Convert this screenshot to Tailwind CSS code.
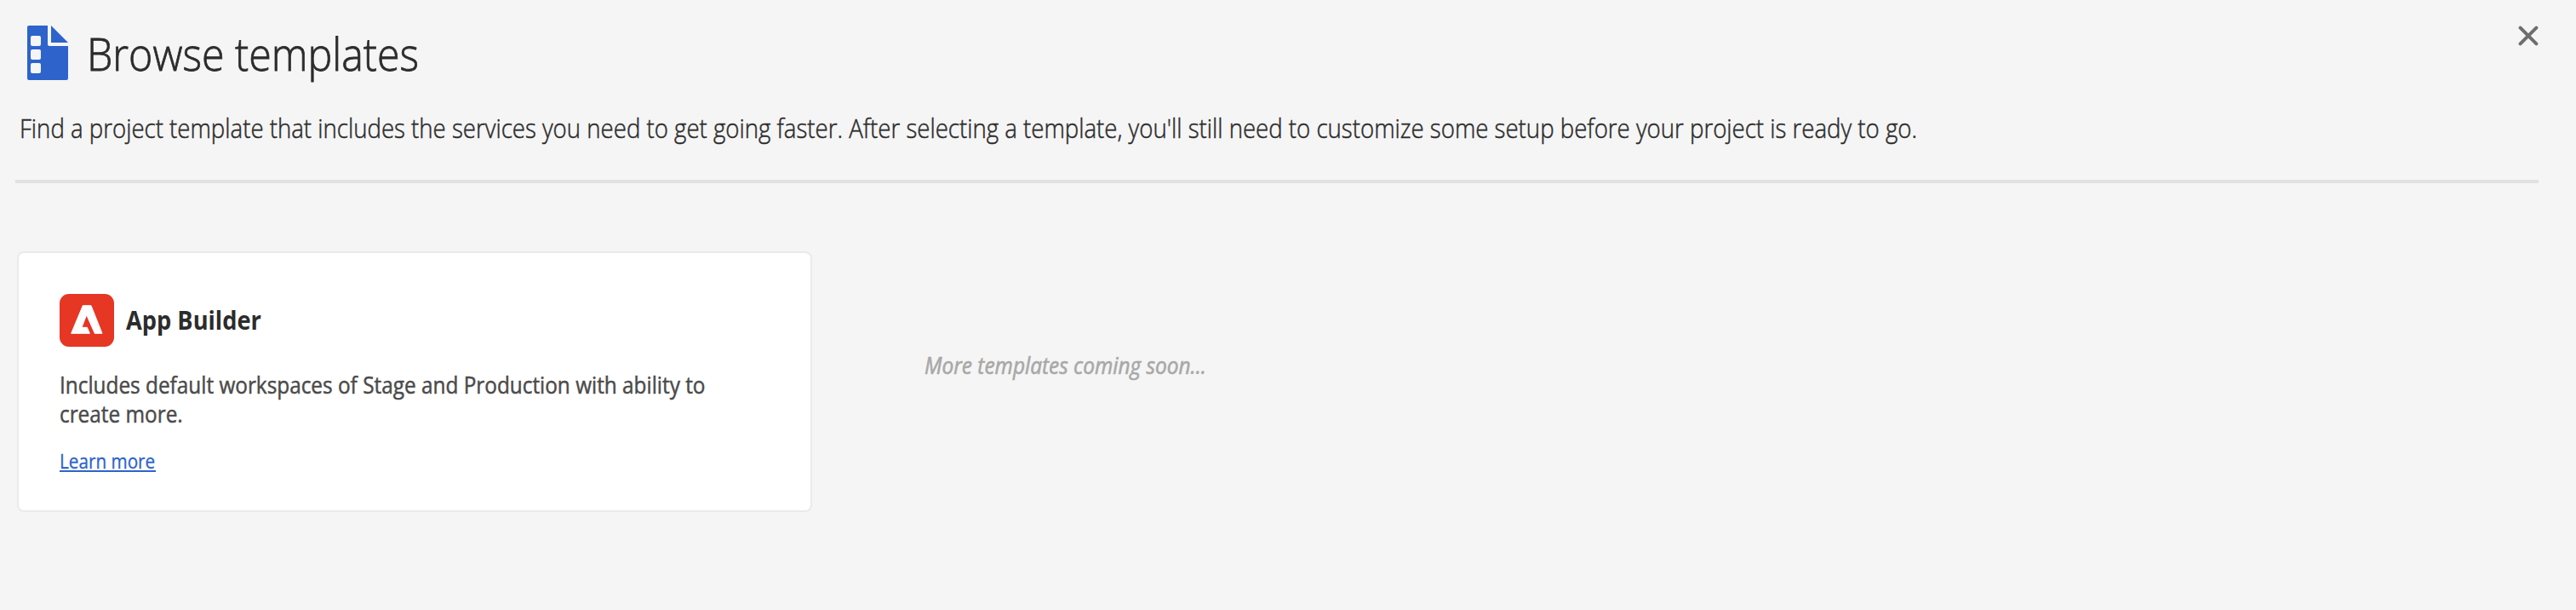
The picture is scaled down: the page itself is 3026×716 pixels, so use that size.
<!DOCTYPE html>
<html lang="en">
<head>
<meta charset="utf-8">
<title>Browse templates</title>
<script src="https://cdn.jsdelivr.net/npm/@tailwindcss/browser@4"></script>
</head>
<body class="h-[716px] overflow-hidden bg-[#f5f5f5] pl-[18px] pr-11 pt-[30px] font-['Open_Sans','Noto_Sans',sans-serif] text-[#2c2c2c]">
  <header class="border-b-4 border-[#e1e1e1] pb-[41px]">
    <div class="flex items-start justify-between">
      <div class="flex h-16 items-start pl-[14px]">
        <svg class="h-16 w-12 shrink-0" viewBox="0 0 48 64" fill="#2d63cb">
          <path fill-rule="evenodd" d="M2 0H24V22a2 2 0 0 0 2 2H48V62a2 2 0 0 1-2 2H2a2 2 0 0 1-2-2V2A2 2 0 0 1 2 0ZM6 12a2 2 0 0 0-2 2v8a2 2 0 0 0 2 2h8a2 2 0 0 0 2-2v-8a2 2 0 0 0-2-2ZM6 28a2 2 0 0 0-2 2v8a2 2 0 0 0 2 2h8a2 2 0 0 0 2-2v-8a2 2 0 0 0-2-2ZM6 44a2 2 0 0 0-2 2v8a2 2 0 0 0 2 2h8a2 2 0 0 0 2-2v-8a2 2 0 0 0-2-2Z"/>
          <path d="M28 0 48 20H28Z"/>
        </svg>
        <h1 class="mt-px ml-[22px] origin-left scale-x-[.912] whitespace-nowrap text-[53px] leading-[64px] font-light [-webkit-text-stroke:0.8px]">Browse templates</h1>
      </div>
      <button aria-label="Close" class="flex h-6 w-6">
        <svg class="h-6 w-6" viewBox="0 0 24 24" fill="none" stroke="#6e6e6e" stroke-width="4" stroke-linecap="round"><path d="M2.6 2.6 21.4 21.4M21.4 2.6 2.6 21.4"/></svg>
      </button>
    </div>
    <p class="mt-9 ml-[5px] w-fit origin-left scale-x-[.8763] whitespace-nowrap text-[31.5px] leading-10 font-light [-webkit-text-stroke:0.5px]">Find a project template that includes the services you need to get going faster. After selecting a template, you'll still need to customize some setup before your project is ready to go.</p>
  </header>
  <main class="mt-20 flex items-start pl-0.5">
    <section class="h-[306px] w-[934px] shrink-0 rounded-[8px] border-2 border-[#eaeaea] bg-white px-12 pt-12">
      <div class="flex h-[62px] items-center">
        <svg class="h-[62px] w-16 shrink-0" viewBox="0 0 192 186">
          <rect width="192" height="186" rx="33" fill="#e63624"/>
          <path fill="#fff" stroke="#fff" stroke-width="3" stroke-linejoin="round" d="M82 41H111L150 139H124L95 74L78 118H97L106 139H41Z"/>
        </svg>
        <h2 class="ml-[14px] origin-left scale-x-[.908] whitespace-nowrap text-[30px] leading-[60px] font-bold">App Builder</h2>
      </div>
      <p class="mt-7 w-fit origin-left scale-x-[.902] whitespace-nowrap text-[27px] leading-[34px] text-[#4b4b4b] [-webkit-text-stroke:0.5px]">Includes default workspaces of Stage and Production with ability to<br>create more.</p>
      <a class="mt-[23px] block h-[28px] w-[113px] border-b-2 border-[#2d63cb] text-[23px] leading-[30px] whitespace-nowrap text-[#2d63cb] [-webkit-text-stroke:0.3px]"><span class="inline-block origin-left scale-x-[.9]">Learn more</span></a>
    </section>
    <p class="mt-[117px] ml-[132px] origin-left scale-x-[.922] whitespace-nowrap text-[26.5px] leading-[34px] text-[#a8a8a8] italic [-webkit-text-stroke:0.6px]">More templates coming soon...</p>
  </main>
</body>
</html>
